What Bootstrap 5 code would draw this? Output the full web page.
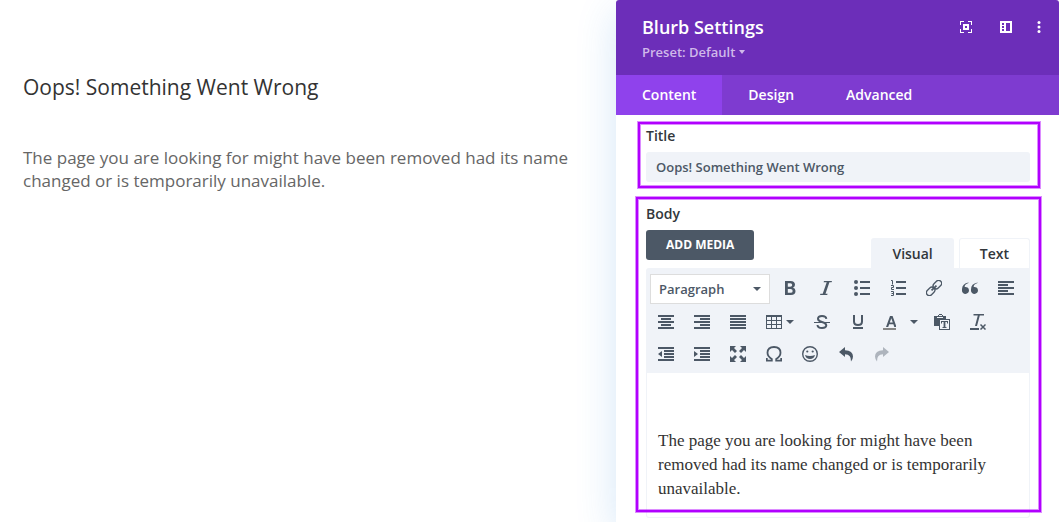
<!DOCTYPE html>
<html lang="en">
<head>
<meta charset="utf-8">
<meta name="viewport" content="width=device-width, initial-scale=1">
<title>Blurb Settings</title>
<link href="https://cdn.jsdelivr.net/npm/bootstrap@5.3.0/dist/css/bootstrap.min.css" rel="stylesheet">
<style>
  body { font-family: "Open Sans", sans-serif; color: #666; background: #fff; }
  svg { display: block; fill: currentColor; flex: none; }
  .plain { background: none; border: 0; padding: 0; color: inherit; }

  .preview { padding: 74px 24px 0 23px; }
  .preview h1 { font-size: 21px; line-height: 26px; font-weight: 400; color: #333; margin-bottom: 46px; }
  .preview p { font-size: 17px; line-height: 23px; margin: 0; }

  .settings { flex: 0 0 443px; background: #fff; color: #32373c; box-shadow: 0 12px 40px rgba(43, 135, 218, .2); border-radius: 3px 3px 0 0; overflow: hidden; }
  .settings-head { background: #6c2eb9; padding: 15px 18px 11px 26px; color: #fff; }
  .settings-head h2 { font-size: 18px; line-height: 24px; font-weight: 600; margin: 0; }
  .settings-head .preset { font-size: 13px; line-height: 24px; font-weight: 600; color: #d0b9ea; display: flex; align-items: center; gap: 4px; margin-top: 1px; }
  .head-tools { gap: 22px; height: 24px; }
  .head-tools button { width: 18px; height: 24px; display: flex; align-items: center; justify-content: center; }
  .head-tools button:last-child { width: 4px; }

  .panel-tabs { background: #7e3bd0; }
  .panel-tabs button { font-size: 14px; line-height: 20px; font-weight: 600; color: #fff; padding: 10px 26px; }
  .panel-tabs button.active { background: #8f42ec; }

  .fields { padding: 10px 29px 0 30px; }
  .field { position: relative; }
  .field > label, .field-label { display: block; font-size: 14px; line-height: 22px; font-weight: 600; margin: 0; }
  .field::after { content: ""; position: absolute; border: 2px solid #b100ff; box-shadow: 0 0 0 1px rgba(177, 0, 255, .45), inset 0 0 0 1px rgba(177, 0, 255, .45); pointer-events: none; }
  .field-title { margin-bottom: 21px; }
  .field-title::after { inset: -3px -10px -6px -8px; }
  .field-body::after { inset: -6px -11px 6px -10px; }
  .field input { margin-top: 5px; height: 30px; width: 100%; border: 0; border-radius: 3px; background: #f0f3f8; color: #4c5866; font-size: 13px; font-weight: 600; padding: 0 10px; display: block; }

  .add-media { background: #4c5866; color: #fff; font-size: 12px; font-weight: 700; line-height: 18px; padding: 6px 20px; border: 0; border-radius: 3px; margin-top: 5px; }
  .mode-tabs { gap: 5px; height: 30px; margin-top: 13px; }
  .mode-tabs button { font-size: 14px; line-height: 20px; font-weight: 600; color: #32373c; padding: 5px 20px; border: 1px solid #f0f3f8; border-bottom: 0; border-radius: 3px 3px 0 0; background: #fff; }
  .mode-tabs button.active { background: #f0f3f8; }
  .tools { background: #f0f3f8; border-radius: 3px 0 0 0; padding: 2px 2px 3px; color: #4c5866; }
  .tools button { width: 36px; height: 32px; display: flex; align-items: center; justify-content: center; }
  .tools .tall { height: 36px; }
  .tools .with-menu { width: 48px; gap: 4px; }
  .tools .color-menu { gap: 14px; }
  .tools button:disabled { opacity: .4; }
  .format { width: 120px; height: 30px; margin: 4px 2px 2px; border: 1px solid #ddd; border-radius: 0; background-color: #fff; color: #4c5866; font-size: 13px; font-weight: 600; line-height: 20px; padding: 4px 24px 4px 8px; background-position: right 8px center; background-size: 8px 4px; background-image: url("data:image/svg+xml,%3csvg xmlns='http://www.w3.org/2000/svg' viewBox='0 0 8 4'%3e%3cpath fill='%234c5866' d='M0 0h8L4 4z'/%3e%3c/svg%3e"); }
  .writing { border: 1px solid #f0f3f8; border-top: 0; border-radius: 0 0 3px 3px; padding: 56px 11px 16px; font-family: "Liberation Serif", serif; font-size: 17px; line-height: 24px; color: #333; }
</style>
</head>
<body>
<div class="d-flex min-vh-100 overflow-hidden">
  <main class="preview flex-grow-1">
    <h1>Oops! Something Went Wrong</h1>
    <p>The page you are looking for might have been removed had its name changed or is temporarily unavailable.</p>
  </main>

  <aside class="settings">
    <header class="settings-head d-flex justify-content-between">
      <div>
        <h2>Blurb Settings</h2>
        <button class="plain preset" type="button">Preset: Default
          <svg width="6" height="4" viewBox="0 0 6 4"><path d="M0 0h6L3 4z"/></svg></button>
      </div>
      <div class="head-tools d-flex">
        <button class="plain" type="button" aria-label="Expand"><svg width="12" height="12" viewBox="0 0 12 12"><path fill-rule="evenodd" d="M0 0h4v1H1v3H0zM8 0h4v4h-1V1H8zM0 8h1v3h3v1H0zM11 8h1v4H8v-1h3zM3 3h6v6H3zM5 5v2h2V5z"/></svg></button>
        <button class="plain" type="button" aria-label="Dock panel"><svg width="12" height="12" viewBox="0 0 12 12"><path fill-rule="evenodd" d="M0 0h12v12H0zM6 2v8h4V2zM2 2v2h2V2zM2 5v2h2V5zM2 8v2h2V8z"/></svg></button>
        <button class="plain" type="button" aria-label="More"><svg width="4" height="12" viewBox="0 0 4 12"><circle cx="2" cy="1.5" r="1.5"/><circle cx="2" cy="6" r="1.5"/><circle cx="2" cy="10.5" r="1.5"/></svg></button>
      </div>
    </header>
    <div class="panel-tabs d-flex" role="tablist">
      <button class="plain active" type="button" role="tab" aria-selected="true">Content</button>
      <button class="plain" type="button" role="tab">Design</button>
      <button class="plain" type="button" role="tab">Advanced</button>
    </div>

    <form class="fields">
      <div class="field field-title">
        <label for="blurb-title">Title</label>
        <input id="blurb-title" type="text" value="Oops! Something Went Wrong">
      </div>
      <div class="field field-body">
        <div class="field-label" id="body-label">Body</div>
        <div class="d-flex justify-content-between align-items-start">
          <button class="add-media" type="button">ADD MEDIA</button>
          <div class="mode-tabs d-flex" role="tablist">
            <button class="active" type="button" role="tab" aria-selected="true">Visual</button>
            <button type="button" role="tab">Text</button>
          </div>
        </div>
        <div class="tools d-flex flex-wrap">
          <select class="form-select format" aria-label="Text format"><option>Paragraph</option></select>
          <button class="plain tall" type="button" aria-label="Bold"><svg width="16" height="16" viewBox="0 0 16 16"><path fill-rule="evenodd" d="M3 1h5.500Q13 1 13 4.800Q13 7 11 7.700Q13.500 8.300 13.500 11Q13.500 15 9 15H3zM5.800 3.200v3.600h2.400q2 0 2-1.800t-2-1.800zM5.800 9v3.800h2.700q2.200 0 2.200-1.900T8.500 9z"/></svg></button>
          <button class="plain tall" type="button" aria-label="Italic"><svg width="16" height="16" viewBox="0 0 16 16"><path d="M6 1h8l-.4 1.300h-2.200L7.500 13.700h2.100L9.200 15H2l.4-1.300h2.300L8.700 2.300H5.600z"/></svg></button>
          <button class="plain tall" type="button" aria-label="Bulleted list"><svg width="16" height="16" viewBox="0 0 16 16"><circle cx="2" cy="2" r="2"/><circle cx="2" cy="8" r="2"/><circle cx="2" cy="14" r="2"/><path d="M6 1h10v2H6zM6 7h10v2H6zM6 13h10v2H6z"/></svg></button>
          <button class="plain tall" type="button" aria-label="Numbered list"><svg width="16" height="16" viewBox="0 0 16 16"><path d="M6 1h10v2H6zM6 7h10v2H6zM6 13h10v2H6z"/><path fill="none" stroke="currentColor" d="M1 .5h1.500V4.500M1 5.500h2.500v2H1.500v2h2.500M1 11.500h2.500v4H1M1.500 13.500h2"/></svg></button>
          <button class="plain tall" type="button" aria-label="Link"><svg width="16" height="16" viewBox="0 0 16 16"><g fill="none" stroke="currentColor" stroke-width="1.300" transform="rotate(-45 8 8)"><rect x="-1.500" y="5" width="9.500" height="6" rx="3"/><rect x="8" y="5" width="9.500" height="6" rx="3"/><path stroke-width="1.800" d="M4.500 8h7"/></g></svg></button>
          <button class="plain tall" type="button" aria-label="Quote"><svg width="16" height="16" viewBox="0 0 16 16"><path d="M6.500 3Q2.600 4.200 2.700 7A3.500 3.500 0 1 1 0 10Q-.3 3.900 6.500 2.600z"/><path d="M15.500 3Q11.600 4.200 11.700 7A3.500 3.500 0 1 1 9 10Q8.700 3.900 15.500 2.600z"/></svg></button>
          <button class="plain tall" type="button" aria-label="Align left"><svg width="16" height="16" viewBox="0 0 16 16"><path d="M0 1h16v2H0zM0 4h10v2H0zM0 7h16v2H0zM0 10h10v2H0zM0 13h16v2H0z"/></svg></button>

          <button class="plain" type="button" aria-label="Align center"><svg width="16" height="16" viewBox="0 0 16 16"><path d="M0 1h16v2H0zM3 4h10v2H3zM0 7h16v2H0zM3 10h10v2H3zM0 13h16v2H0z"/></svg></button>
          <button class="plain" type="button" aria-label="Align right"><svg width="16" height="16" viewBox="0 0 16 16"><path d="M0 1h16v2H0zM6 4h10v2H6zM0 7h16v2H0zM6 10h10v2H6zM0 13h16v2H0z"/></svg></button>
          <button class="plain" type="button" aria-label="Justify"><svg width="16" height="16" viewBox="0 0 16 16"><path d="M0 1h16v2H0zM0 4h16v2H0zM0 7h16v2H0zM0 10h16v2H0zM0 13h16v2H0z"/></svg></button>
          <button class="plain with-menu" type="button" aria-label="Table"><svg width="16" height="16" viewBox="0 0 16 16"><path fill-rule="evenodd" d="M0 1h16v14H0zM1 3v3h4V3zM6 3v3h4V3zM11 3v3h4V3zM1 7v3h4V7zM6 7v3h4V7zM11 7v3h4V7zM1 11v3h4v-3zM6 11v3h4v-3zM11 11v3h4v-3z"/></svg><svg width="8" height="4" viewBox="0 0 8 4"><path d="M0 0h8L4 4z"/></svg></button>
          <button class="plain" type="button" aria-label="Strikethrough"><svg width="16" height="16" viewBox="0 0 16 16"><path fill="none" stroke="currentColor" stroke-width="2" d="M12.300 4.800Q12 2 8 2T4 4.800Q4 7 8 8T12.300 11.300Q12.300 14 8 14T3.500 11"/><path d="M0 8h16v1H0z"/></svg></button>
          <button class="plain" type="button" aria-label="Underline"><svg width="16" height="16" viewBox="0 0 16 16"><path fill="none" stroke="currentColor" stroke-width="2" d="M4 1v6.500Q4 11 8 11T12 7.500V1"/><path d="M3 13h10v2H3z"/></svg></button>
          <button class="plain with-menu color-menu" type="button" aria-label="Text color"><svg width="14" height="16" viewBox="0 0 14 16"><path fill-rule="evenodd" d="M4 13L8 2h2.600L14.500 13h-2.200l-.9-2.800H7.200L6.200 13zM7.800 8.400h3L9.300 4.300z"/><path fill="#868686" d="M1 14h13v2H1z"/></svg><svg width="8" height="4" viewBox="0 0 8 4"><path d="M0 0h8L4 4z"/></svg></button>
          <button class="plain" type="button" aria-label="Paste as text"><svg width="16" height="16" viewBox="0 0 16 16"><path fill-rule="evenodd" d="M0 2h4V1h1V0h3v1h1v1h3v10H0zM3 3v1h6V3zM5 1v1h3V1z"/><path fill="#f0f3f8" d="M5 5h10.500v10.500H5z"/><path fill-rule="evenodd" d="M5 5h11v11H5zM6 6v9h9V6z"/><path d="M7 7h7v2.500h-1V8h-1.600v5h1.100v1h-4v-1h1.100V8H8v1.500H7z"/></svg></button>
          <button class="plain" type="button" aria-label="Clear formatting"><svg width="16" height="16" viewBox="0 0 16 16"><path d="M3.500 0H14v1.500H9.800L7 12H5L7.800 1.500H3.500zM0 14h9v2H0z"/><path fill="none" stroke="currentColor" stroke-width="1.500" d="M10.500 10.500l5 5M15.500 10.500l-5 5"/></svg></button>

          <button class="plain" type="button" aria-label="Outdent"><svg width="16" height="16" viewBox="0 0 16 16"><path d="M0 1h16v2H0zM6 4h10v2H6zM6 7h10v2H6zM6 10h10v2H6zM0 13h16v2H0zM4 5v6L0 8z"/></svg></button>
          <button class="plain" type="button" aria-label="Indent"><svg width="16" height="16" viewBox="0 0 16 16"><path d="M0 1h16v2H0zM6 4h10v2H6zM6 7h10v2H6zM6 10h10v2H6zM0 13h16v2H0zM0 5v6l4-3z"/></svg></button>
          <button class="plain" type="button" aria-label="Fullscreen"><svg width="16" height="16" viewBox="0 0 16 16"><path d="M0 0h6L4 2l3 3-2 2-3-3-2 2zM16 0h-6l2 2-3 3 2 2 3-3 2 2zM0 16h6l-2-2 3-3-2-2-3 3-2-2zM16 16h-6l2-2-3-3 2-2 3 3 2-2z"/></svg></button>
          <button class="plain" type="button" aria-label="Special character"><svg width="16" height="16" viewBox="0 0 16 16"><path fill="none" stroke="currentColor" stroke-width="1.800" d="M.8 12v2.600H5.800V13Q1.500 10.500 1.500 6.800Q1.500 1 8 1T14.500 6.800Q14.500 10.500 10.200 13V14.600H15.200V12"/></svg></button>
          <button class="plain" type="button" aria-label="Emoticons"><svg width="16" height="16" viewBox="0 0 16 16"><circle cx="8" cy="8" r="7.300" fill="none" stroke="currentColor" stroke-width="1.400"/><circle cx="5.300" cy="5.500" r="1.100"/><circle cx="10.700" cy="5.500" r="1.100"/><path d="M3 9q5 2 10 0-1 4-5 4T3 9z"/></svg></button>
          <button class="plain" type="button" aria-label="Undo"><svg width="16" height="16" viewBox="0 0 16 16"><path d="M1 6l6-5v3.200q8 .3 8 6.300 0 2.500-2 5 .5-7-6-7.300V11z"/></svg></button>
          <button class="plain" type="button" aria-label="Redo" disabled><svg width="16" height="16" viewBox="0 0 16 16"><path d="M15 6L9 1v3.200q-8 .3-8 6.300 0 2.500 2 5-.5-7 6-7.300V11z"/></svg></button>
        </div>
        <div class="writing" contenteditable="true" role="textbox" aria-labelledby="body-label">The page you are looking for might have been removed had its name changed or is temporarily unavailable.</div>
      </div>
    </form>
  </aside>
</div>
<script src="https://cdn.jsdelivr.net/npm/bootstrap@5.3.0/dist/js/bootstrap.bundle.min.js"></script>
</body>
</html>
